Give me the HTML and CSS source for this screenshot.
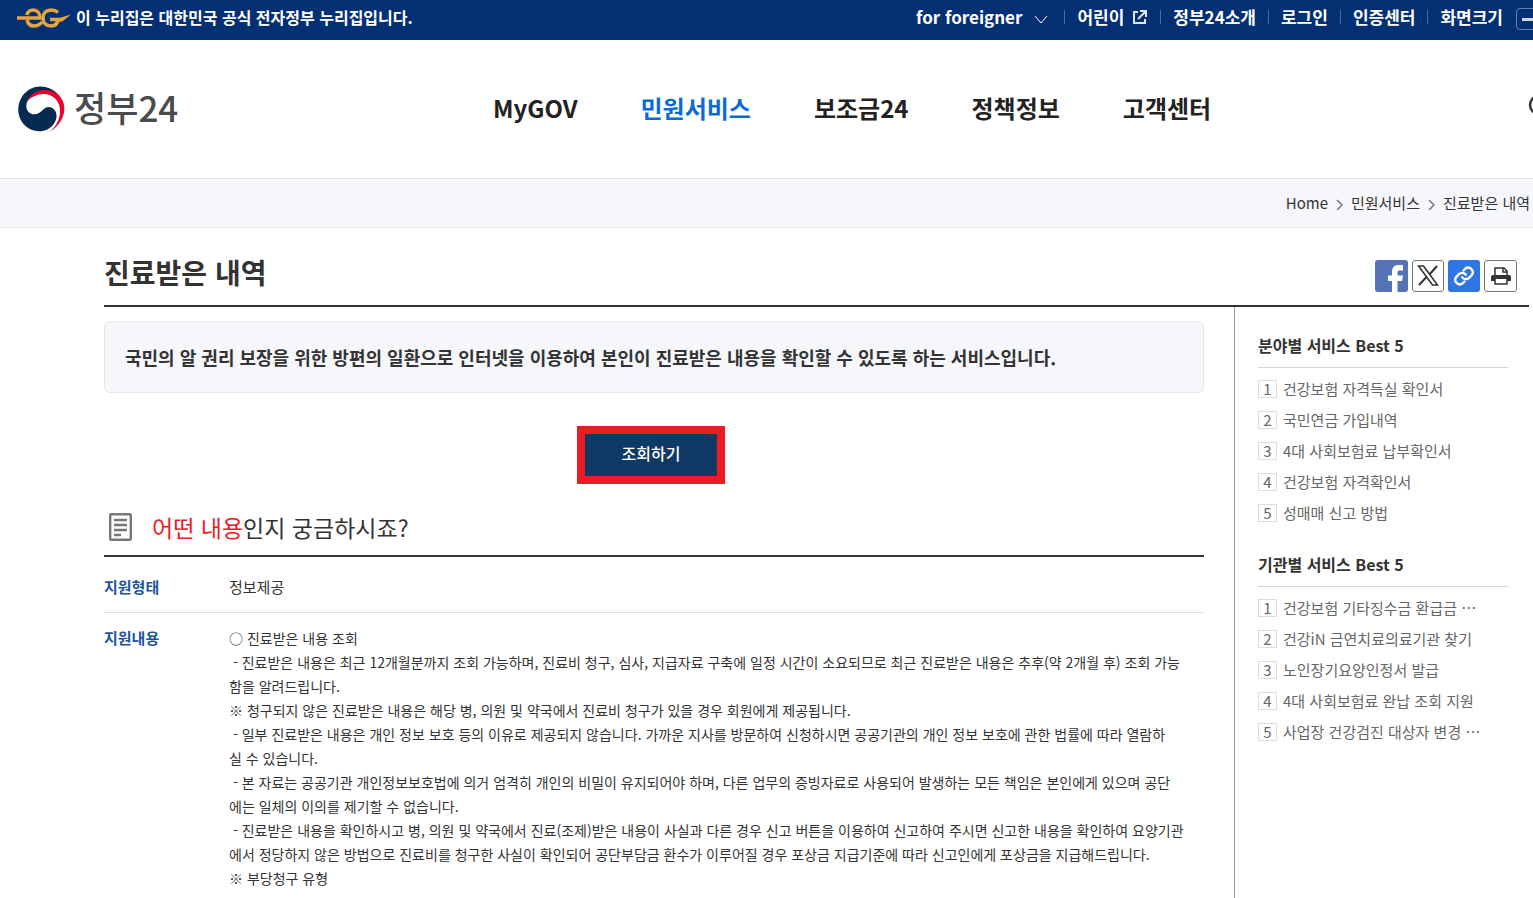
FILE: index.html
```html
<!DOCTYPE html>
<html lang="ko">
  <head>
    <meta charset="UTF-8" />
    <meta name="viewport" content="width=device-width, initial-scale=1.0" />
    <title>진료받은 내역 | 정부24</title>
    <link rel="stylesheet" href="styles.css">
  </head>
  <body>
    <!-- Official site bar -->
    <div class="topbar">
      <p class="official">
        <svg width="54" height="20" viewBox="0 0 54 20" fill="none" stroke="#e3a53c" stroke-width="3.600">
          <path d="M0 10H23C23 5 20 2 16.500 2C13 2 10.500 4 10 7M10 12C11 16 13.500 18 17 18C21 18 23 16.500 25 14" />
          <path d="M41 4.500C39 2.700 37 2 34.500 2C29 2 26 5.500 26 10C26 14.500 29 18 34 18C38 18 40.500 16 41 11.500H33" />
          <path d="M42 10L54 6.500L46 13L40 15Z" fill="#e3a53c" stroke="none" />
        </svg>
        이 누리집은 대한민국 공식 전자정부 누리집입니다.
      </p>
      <ul class="util">
        <li>
          <a href="#">for foreigner
            <svg class="chevron" width="14" height="9" viewBox="0 0 14 9" fill="none" stroke="#fff"><path d="M1 1L7 8L13 1" /></svg>
          </a>
        </li>
        <li>
          <a href="#">어린이
            <svg width="16" height="16" viewBox="0 0 16 16" fill="none" stroke="#dfe7f5" stroke-width="2"><path d="M6 3H2V14H13V10M8 2H14V8M14 2L6 10" /></svg>
          </a>
        </li>
        <li><a href="#">정부24소개</a></li>
        <li><a href="#">로그인</a></li>
        <li><a href="#">인증센터</a></li>
        <li class="size">화면크기 <button type="button" aria-label="축소"></button></li>
      </ul>
    </div>

    <!-- Logo and main menu -->
    <header class="header">
      <a class="logo" href="#">
        <svg width="47" height="46" viewBox="0 0 140 136">
          <path fill="#e4032e" d="M24 48C36 4 100 -6 127 33C152 68 132 112 96 135C126 108 136 64 112 38C88 14 50 20 24 48Z" />
          <path fill="#052c50" d="M119 25C92 -8 40 -8 14 28C-12 66 2 112 40 130C70 142 106 128 114 96C118 76 106 62 92 62C74 62 70 84 48 84C28 83 20 64 28 44C42 12 86 0 119 25Z" />
        </svg>
        <span>정부24</span>
      </a>
      <nav class="gnb">
        <a href="#">MyGOV</a>
        <a class="on" href="#">민원서비스</a>
        <a href="#">보조금24</a>
        <a href="#">정책정보</a>
        <a href="#">고객센터</a>
      </nav>
      <button class="search" type="button" aria-label="검색">
        <svg width="24" height="24" viewBox="0 0 24 24" fill="none" stroke="#333" stroke-width="2.500"><circle cx="12" cy="11" r="9" /><path d="M18 18L23 23" /></svg>
      </button>
    </header>

    <nav class="crumb">
      <a href="#">Home</a>
      <svg width="7" height="11" viewBox="0 0 7 11" fill="none" stroke="#777" stroke-width="1.500"><path d="M1 1L6 6L1 11" /></svg>
      <a href="#">민원서비스</a>
      <svg width="7" height="11" viewBox="0 0 7 11" fill="none" stroke="#777" stroke-width="1.500"><path d="M1 1L6 6L1 11" /></svg>
      <a href="#">진료받은 내역</a>
    </nav>

    <div class="container">
      <div class="title">
        <h1>진료받은 내역</h1>
        <div class="share">
          <button class="fb" type="button" aria-label="페이스북">
            <svg width="33" height="32" viewBox="0 0 33 32"><path fill="#fff" d="M17 32V21H13V15.500H17V12C17 8 19 5 23 5H28V10.500H25C23 10.500 22.500 11 22.500 13V15.500H28L27 21H22.500V32Z" /></svg>
          </button>
          <button class="line" type="button" aria-label="X">
            <svg width="22" height="21" viewBox="0 0 22 21" fill="none" stroke="#333"><path stroke-width="1.600" d="M1.500 1H6.500L20.500 20H15.500Z" /><path stroke-width="2" d="M20 1L12.500 9.500M9.500 12L2 20" /></svg>
          </button>
          <button class="link" type="button" aria-label="링크 복사">
            <svg width="22" height="22" viewBox="0 0 24 24" fill="none" stroke="#fff" stroke-width="2.600" stroke-linecap="round"><path d="M10 13.500a5 5 0 0 0 7.500.5l3-3a5 5 0 0 0-7-7l-2 2" /><path d="M14 10.500a5 5 0 0 0-7.500-.5l-3 3a5 5 0 0 0 7 7l2-2" /></svg>
          </button>
          <button class="line print" type="button" aria-label="인쇄">
            <svg width="22" height="20" viewBox="0 0 22 20"><path fill="#333" d="M1 11Q1 9 3 9H19Q21 9 21 11V15H17V13H5V15H1Z" /><path fill="none" stroke="#333" stroke-width="1.500" d="M5 9V2H14L17 5V9M13 2V6H17M5 13V18H17V13" /></svg>
          </button>
        </div>
      </div>

      <div class="columns">
        <main class="content">
          <p class="notice">국민의 알 권리 보장을 위한 방편의 일환으로 인터넷을 이용하여 본인이 진료받은 내용을 확인할 수 있도록 하는 서비스입니다.</p>
          <button class="submit" type="button">조회하기</button>

          <h2>
            <svg width="23" height="28" viewBox="0 0 23 28" fill="none" stroke="#777" stroke-width="2.400"><rect x="1.200" y="1.200" width="20.600" height="25.600" rx="1" /><path d="M5 7H18M5 12H18M5 17H18M5 22H12" /></svg>
            <span><em>어떤 내용</em>인지 궁금하시죠?</span>
          </h2>
          <dl class="detail">
            <div>
              <dt>지원형태</dt>
              <dd>정보제공</dd>
            </div>
            <div>
              <dt>지원내용</dt>
              <dd>
                <p>○ 진료받은 내용 조회</p>
                <p>&nbsp;- 진료받은 내용은 최근 12개월분까지 조회 가능하며, 진료비 청구, 심사, 지급자료 구축에 일정 시간이 소요되므로 최근 진료받은 내용은 추후(약 2개월 후) 조회 가능<br>함을 알려드립니다.</p>
                <p>※ 청구되지 않은 진료받은 내용은 해당 병, 의원 및 약국에서 진료비 청구가 있을 경우 회원에게 제공됩니다.</p>
                <p>&nbsp;- 일부 진료받은 내용은 개인 정보 보호 등의 이유로 제공되지 않습니다. 가까운 지사를 방문하여 신청하시면 공공기관의 개인 정보 보호에 관한 법률에 따라 열람하<br>실 수 있습니다.</p>
                <p>&nbsp;- 본 자료는 공공기관 개인정보보호법에 의거 엄격히 개인의 비밀이 유지되어야 하며, 다른 업무의 증빙자료로 사용되어 발생하는 모든 책임은 본인에게 있으며 공단<br>에는 일체의 이의를 제기할 수 없습니다.</p>
                <p>&nbsp;- 진료받은 내용을 확인하시고 병, 의원 및 약국에서 진료(조제)받은 내용이 사실과 다른 경우 신고 버튼을 이용하여 신고하여 주시면 신고한 내용을 확인하여 요양기관<br>에서 정당하지 않은 방법으로 진료비를 청구한 사실이 확인되어 공단부담금 환수가 이루어질 경우 포상금 지급기준에 따라 신고인에게 포상금을 지급해드립니다.</p>
                <p>※ 부당청구 유형</p>
              </dd>
            </div>
          </dl>
        </main>

        <aside class="side">
          <section>
            <h3>분야별 서비스 Best 5</h3>
            <ol>
              <li><span>1</span><a href="#">건강보험 자격득실 확인서</a></li>
              <li><span>2</span><a href="#">국민연금 가입내역</a></li>
              <li><span>3</span><a href="#">4대 사회보험료 납부확인서</a></li>
              <li><span>4</span><a href="#">건강보험 자격확인서</a></li>
              <li><span>5</span><a href="#">성매매 신고 방법</a></li>
            </ol>
          </section>
          <section>
            <h3>기관별 서비스 Best 5</h3>
            <ol>
              <li><span>1</span><a href="#">건강보험 기타징수금 환급금 ⋯</a></li>
              <li><span>2</span><a href="#">건강iN 금연치료의료기관 찾기</a></li>
              <li><span>3</span><a href="#">노인장기요양인정서 발급</a></li>
              <li><span>4</span><a href="#">4대 사회보험료 완납 조회 지원</a></li>
              <li><span>5</span><a href="#">사업장 건강검진 대상자 변경 ⋯</a></li>
            </ol>
          </section>
        </aside>
      </div>
    </div>
  </body>
</html>
```

FILE: styles.css
```css
* {
  box-sizing: border-box;
  margin: 0;
  padding: 0;
}
html,
body {
  height: 100%;
}
body {
  display: flex;
  flex-direction: column;
  overflow: hidden;
  background: #fff;
  color: #333;
  font-family: "Noto Sans CJK KR", sans-serif;
  font-size: 15px;
  line-height: 24px;
}
a {
  color: inherit;
  text-decoration: none;
}
ul,
ol {
  list-style: none;
}
button {
  border: 0;
  font: inherit;
  cursor: pointer;
}
svg {
  flex: none;
}
/* Official site bar */
.topbar {
  display: flex;
  flex: none;
  justify-content: space-between;
  height: 40px;
  padding: 5px 0 0 17px;
  background: #032f73;
  color: #fff;
  font-weight: 700;
}
.official {
  display: flex;
  gap: 5px;
  font-size: 16px;
}
.official svg {
  margin-top: 3px;
}
.util {
  display: flex;
  margin-right: -9px;
  font-size: 17px;
}
.util li,
.util a {
  display: flex;
  align-items: center;
  height: 24px;
}
.util a {
  gap: 8px;
}
.util .chevron {
  margin: 4px 4px 0;
}
.util li + li::before {
  content: "";
  width: 1px;
  height: 14px;
  margin: 0 12px;
  background: #4a69a0;
}
.size button {
  width: 26px;
  height: 22px;
  margin: 4px 0 0 13px;
  border: 1px solid #6580ae;
  border-radius: 4px;
  background: linear-gradient(#cdd6e6, #cdd6e6) 5px 9px / 12px 3px no-repeat;
}
/* Logo and main menu */
.header {
  display: flex;
  flex: none;
  align-items: center;
  height: 138px;
  padding-left: 18px;
}
.logo {
  display: flex;
  align-items: center;
  gap: 9px;
  width: 475px;
  color: #4a4b4d;
  font-size: 35px;
  font-weight: 500;
}
.logo span {
  padding-bottom: 5px;
}
.gnb {
  display: flex;
  flex: 1;
  gap: 63px;
  padding-bottom: 2px;
  color: #222;
  font-size: 24px;
  font-weight: 700;
}
.gnb .on {
  color: #0a6ad6;
}
.search {
  margin-right: -18px;
  background: none;
}
/* Breadcrumb */
.crumb {
  display: flex;
  flex: none;
  align-items: center;
  justify-content: flex-end;
  gap: 8px;
  height: 50px;
  padding-right: 3px;
  border-top: 1px solid #e1e4e8;
  border-bottom: 1px solid #e1e4e8;
  background: #f5f7fb;
}
.crumb svg {
  margin-top: 3px;
}
/* Page body */
.container {
  display: flex;
  flex: 1;
  flex-direction: column;
  padding: 0 4px 0 104px;
}
.title {
  display: flex;
  align-items: center;
  justify-content: space-between;
  height: 79px;
  padding: 18px 12px 0 0;
  border-bottom: 2px solid #333;
}
.title h1 {
  padding-bottom: 8px;
  font-size: 28px;
}
.share {
  display: flex;
  gap: 4px;
}
.share button {
  display: flex;
  align-items: center;
  justify-content: center;
  width: 32px;
  height: 32px;
  border-radius: 3px;
}
.share .fb,
.share .print {
  width: 33px;
}
.share .fb {
  background: #5572b5;
}
.share .link {
  background: #2f76e4;
}
.share .line {
  border: 1px solid #777;
  background: #fff;
}
.columns {
  display: flex;
  flex: 1;
  gap: 30px;
}
.content {
  flex: 1;
  padding-top: 14px;
}
.notice {
  padding: 23px 20px;
  border: 1px solid #e6e8ec;
  border-radius: 6px;
  background: #f6f7fa;
  font-size: 18px;
  font-weight: 700;
}
.submit {
  display: block;
  width: 148px;
  height: 58px;
  margin: 33px 0 0 43%;
  padding-bottom: 4px;
  border: 8px solid #ed1c24;
  background: #0f3a65;
  color: #fff;
  font-size: 16px;
  font-weight: 500;
}
.content h2 {
  display: flex;
  align-items: center;
  gap: 20px;
  height: 73px;
  padding: 14px 5px 0;
  border-bottom: 2px solid #333;
  font-size: 23px;
  font-weight: 400;
}
.content h2 em {
  color: #ed1c24;
  font-style: normal;
}
.detail > div {
  display: flex;
  padding: 18px 0 13px;
  border-bottom: 1px solid #e0e0e0;
}
.detail > div:last-child {
  padding: 13px 0 0;
  border: 0;
}
.detail dt {
  width: 125px;
  color: #1d5598;
  font-weight: 700;
}
.detail dd {
  flex: 1;
}
.detail p {
  font-size: 14px;
}
/* Best 5 lists */
.side {
  width: 295px;
  padding: 26px 21px 0 23px;
  border-left: 1px solid #999;
}
.side section + section {
  margin-top: 27px;
}
.side h3 {
  height: 35px;
  border-bottom: 1px solid #d5d5d5;
  font-size: 16px;
}
.side ol {
  display: flex;
  flex-direction: column;
  gap: 7px;
  padding-top: 9px;
  color: #666;
}
.side li {
  display: flex;
  align-items: center;
  gap: 6px;
}
.side span {
  width: 19px;
  height: 18px;
  border: 1px solid #ddd;
  line-height: 16px;
  text-align: center;
}
```
